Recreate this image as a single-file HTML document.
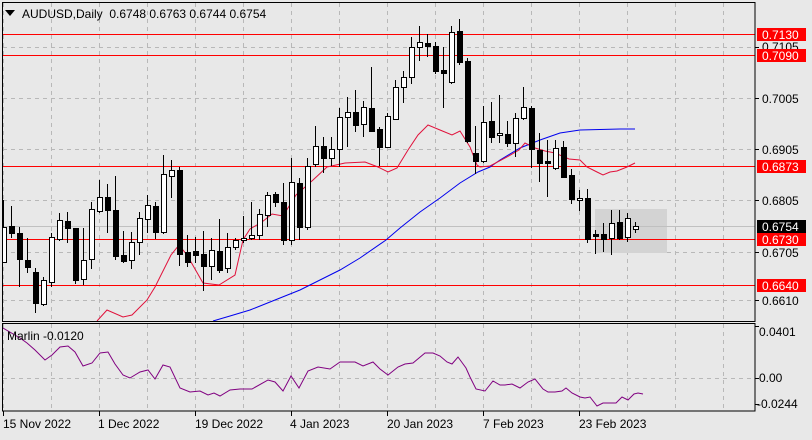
<!DOCTYPE html>
<html><head><meta charset="utf-8">
<style>
html,body{margin:0;padding:0;background:#e8e8e8;}
body{width:812px;height:435px;overflow:hidden;font-family:"Liberation Sans",sans-serif;}
svg text{font-family:"Liberation Sans",sans-serif;font-size:12px;fill:#000;}
</style></head><body>
<svg id="s" width="812" height="435" xmlns="http://www.w3.org/2000/svg">
<rect width="812" height="435" fill="#e8e8e8"/>
<defs><clipPath id="c"><rect x="3" y="3" width="752" height="318"/></clipPath>
<clipPath id="c2"><rect x="3" y="324" width="752" height="87"/></clipPath></defs>
<g id="grid" stroke="#b8b8b8" stroke-dasharray="4,4" stroke-width="1"></g>
<g clip-path="url(#c)">
<rect x="595" y="209" width="72" height="44" fill="#d3d3d3"/>
<line x1="3" x2="755" y1="226.5" y2="226.5" stroke="#c0c0c0"/>
<g stroke="#ff0000" stroke-width="1">
<line x1="3" x2="755" y1="34.5" y2="34.5"/>
<line x1="3" x2="755" y1="55.5" y2="55.5"/>
<line x1="3" x2="755" y1="166.5" y2="166.5"/>
<line x1="3" x2="755" y1="239.5" y2="239.5"/>
<line x1="3" x2="755" y1="285.5" y2="285.5"/>
</g>
<polyline fill="none" stroke="#0000ee" stroke-width="1" points="213,321 230,316 250,310 275,300 300,290 320,280 340,270 360,258 386,240 400,228 420,212 440,198 460,183 478,172 490,167 500,160 520,148 540,140 560,133 580,130 600,129.5 620,129 635,129"/>
<polyline fill="none" stroke="#e0103a" stroke-width="1" points="97,321 107,310 123,317 132,315 147,300 155,287 171,255 179,245 187,255 203,283 219,285 235,275 243,240 250,229 262,222 272,214 283,216 296,195 313,180 327,167 345,163 365,162 378,167 388,172 397,168 408,150 418,135 428,125 440,130 452,135 460,131 470,147 477,165 480,167 490,166 507,157 519,150 525,143 535,148 545,151 555,153 569,159 580,160 587,167 597,172 603,175 610,172 617,171 627,167 635,163"/>
<g id="candles"></g>
</g>
<line x1="2.5" y1="2" x2="2.5" y2="322" stroke="#000"/>
<rect x="2.5" y="2.5" width="752.5" height="319" fill="none" stroke="#000"/>
<rect x="2.5" y="323.5" width="752.5" height="87.5" fill="none" stroke="#000"/>
<g clip-path="url(#c2)">
<polyline fill="none" stroke="#800080" stroke-width="1" points="3,328 20,338 27,343 35,350 45,360 52,355 60,347 68,346 75,352 83,366 92,363 100,353 108,352 115,364 123,375 130,378 140,372 148,370 155,379 163,365 170,367 180,388 190,392 200,391 208,395 214,393 220,396 230,390 240,389 252,389 268,380 275,382 283,391 291,376 299,388 308,371 318,367 330,369 340,362 355,362 363,366 373,362 380,369 388,375 398,367 405,364 413,363 425,353 433,353 440,356 447,362 452,364 458,357 466,368 470,377 476,389 485,391 493,381 500,385 505,385 512,384 520,388 528,382 535,379 543,389 548,392 555,392 562,391 566,388 572,393 580,397 585,398 590,397 597,406 603,403 610,403 616,403 622,397 628,400 634,394 638,393 643,394"/>
</g>
<path d="M5,10 L15,10 L10,16 Z" fill="#000"/>
<text x="22" y="18">AUDUSD,Daily&#160; 0.6748 0.6763 0.6744 0.6754</text>
<text x="7" y="340">Marlin -0.0120</text>
<g id="ticks" stroke="#000"></g>
<text x="762" y="51">0.7105</text>
<text x="762" y="103">0.7005</text>
<text x="762" y="154">0.6905</text>
<text x="762" y="205">0.6805</text>
<text x="762" y="257">0.6705</text>
<text x="762" y="305">0.6610</text>
<rect x="757" y="28" width="49" height="13" fill="#ff0000"/><text x="762" y="39" style="fill:#fff">0.7130</text>
<rect x="757" y="49" width="49" height="13" fill="#ff0000"/><text x="762" y="60" style="fill:#fff">0.7090</text>
<rect x="757" y="160" width="49" height="13" fill="#ff0000"/><text x="762" y="171" style="fill:#fff">0.6873</text>
<rect x="757" y="220" width="49" height="13" fill="#000"/><text x="762" y="231" style="fill:#fff">0.6754</text>
<rect x="757" y="233" width="49" height="13" fill="#ff0000"/><text x="762" y="244" style="fill:#fff">0.6730</text>
<rect x="757" y="279" width="49" height="13" fill="#ff0000"/><text x="762" y="290" style="fill:#fff">0.6640</text>
<text x="759" y="336">0.0401</text>
<text x="759" y="382">0.00</text>
<text x="757" y="408">-0.0244</text>
<text x="3" y="428">15 Nov 2022</text>
<text x="98" y="428">1 Dec 2022</text>
<text x="195" y="428">19 Dec 2022</text>
<text x="290" y="428">4 Jan 2023</text>
<text x="387" y="428">20 Jan 2023</text>
<text x="483" y="428">7 Feb 2023</text>
<text x="579" y="428">23 Feb 2023</text>
</svg>
<script>
var NS="http://www.w3.org/2000/svg";
function el(p,t,a){var e=document.createElementNS(NS,t);for(var k in a)e.setAttribute(k,a[k]);p.appendChild(e);return e;}
var g=document.getElementById("grid");
var xs=[3,51,99,147,195,243,291,339,387,435,483,531,579,627,675,723];
xs.forEach(function(x){el(g,"line",{x1:x+.5,x2:x+.5,y1:3,y2:321});el(g,"line",{x1:x+.5,x2:x+.5,y1:324,y2:411});});
[47,98,149,200,252,300].forEach(function(y){el(g,"line",{x1:3,x2:755,y1:y+.5,y2:y+.5});});
el(g,"line",{x1:3,x2:755,y1:378.5,y2:378.5});
var tk=document.getElementById("ticks");
[47,98,149,200,252,300,326,378,404].forEach(function(y){el(tk,"line",{x1:755,x2:759,y1:y+.5,y2:y+.5});});
[3,99,195,291,387,483,579].forEach(function(x){el(tk,"line",{x1:x+.5,x2:x+.5,y1:411,y2:416});});
var D=[[227,262,200,262,1],[226,233,206,238,0],[233,259,227,287,0],[260,267,238,273,0],[272,303,268,313,0],[280,304,277,306,1],[237,282,233,287,1],[220,239,213,241,1],[221,228,212,243,0],[228,280,228,284,0],[260,279,228,285,1],[209,259,202,269,1],[197,211,180,213,1],[197,210,184,233,0],[210,256,176,260,0],[255,261,231,263,0],[242,260,232,269,1],[218,242,212,255,1],[205,219,195,233,1],[206,232,202,239,0],[174,232,155,234,1],[170,176,160,198,1],[170,254,167,266,0],[252,262,235,267,0],[251,255,237,263,0],[254,266,231,291,0],[250,266,238,280,1],[251,270,219,273,0],[247,268,233,273,1],[240,247,238,250,1],[238,240,216,243,1],[235,238,202,240,1],[214,235,209,240,1],[195,215,192,227,1],[194,202,192,207,0],[202,240,183,245,0],[182,240,158,245,1],[183,227,178,240,0],[166,227,158,230,1],[146,164,126,167,1],[146,158,137,173,0],[149,158,137,166,1],[117,149,108,167,1],[112,117,97,147,1],[112,125,90,132,0],[107,124,101,137,1],[108,131,67,131,0],[129,147,127,166,0],[116,147,113,147,1],[87,119,80,120,1],[77,87,71,103,1],[47,77,37,84,1],[42,47,26,61,1],[43,46,34,57,0],[46,71,42,74,0],[70,73,47,108,0],[32,82,26,84,1],[31,62,19,65,0],[61,141,58,143,0],[153,161,126,174,0],[122,161,106,163,1],[121,137,102,143,0],[133,135,95,143,1],[134,143,121,147,0],[118,143,113,157,1],[107,118,87,120,1],[108,149,106,168,0],[150,163,133,182,0],[161,163,140,197,0],[148,168,140,170,1],[147,177,141,178,0],[175,199,169,204,0],[198,200,190,211,1],[198,239,189,243,0],[234,236,230,254,0],[234,239,223,252,0],[223,238,210,255,1],[222,238,210,240,0],[218,237,213,242,1],[226,229,222,233,1]];
var cg=document.getElementById("candles");
D.forEach(function(d,i){var x=3+8*i;
el(cg,"line",{x1:x+.5,x2:x+.5,y1:d[2],y2:d[3],stroke:"#000"});
var h=Math.max(d[1]-d[0],1);
if(d[4])el(cg,"rect",{x:x-2+.5,y:d[0]+.5,width:5,height:h,fill:"#fff",stroke:"#000"});
else el(cg,"rect",{x:x-2,y:d[0],width:6,height:h+1,fill:"#000"});
});
</script>
</body></html>
